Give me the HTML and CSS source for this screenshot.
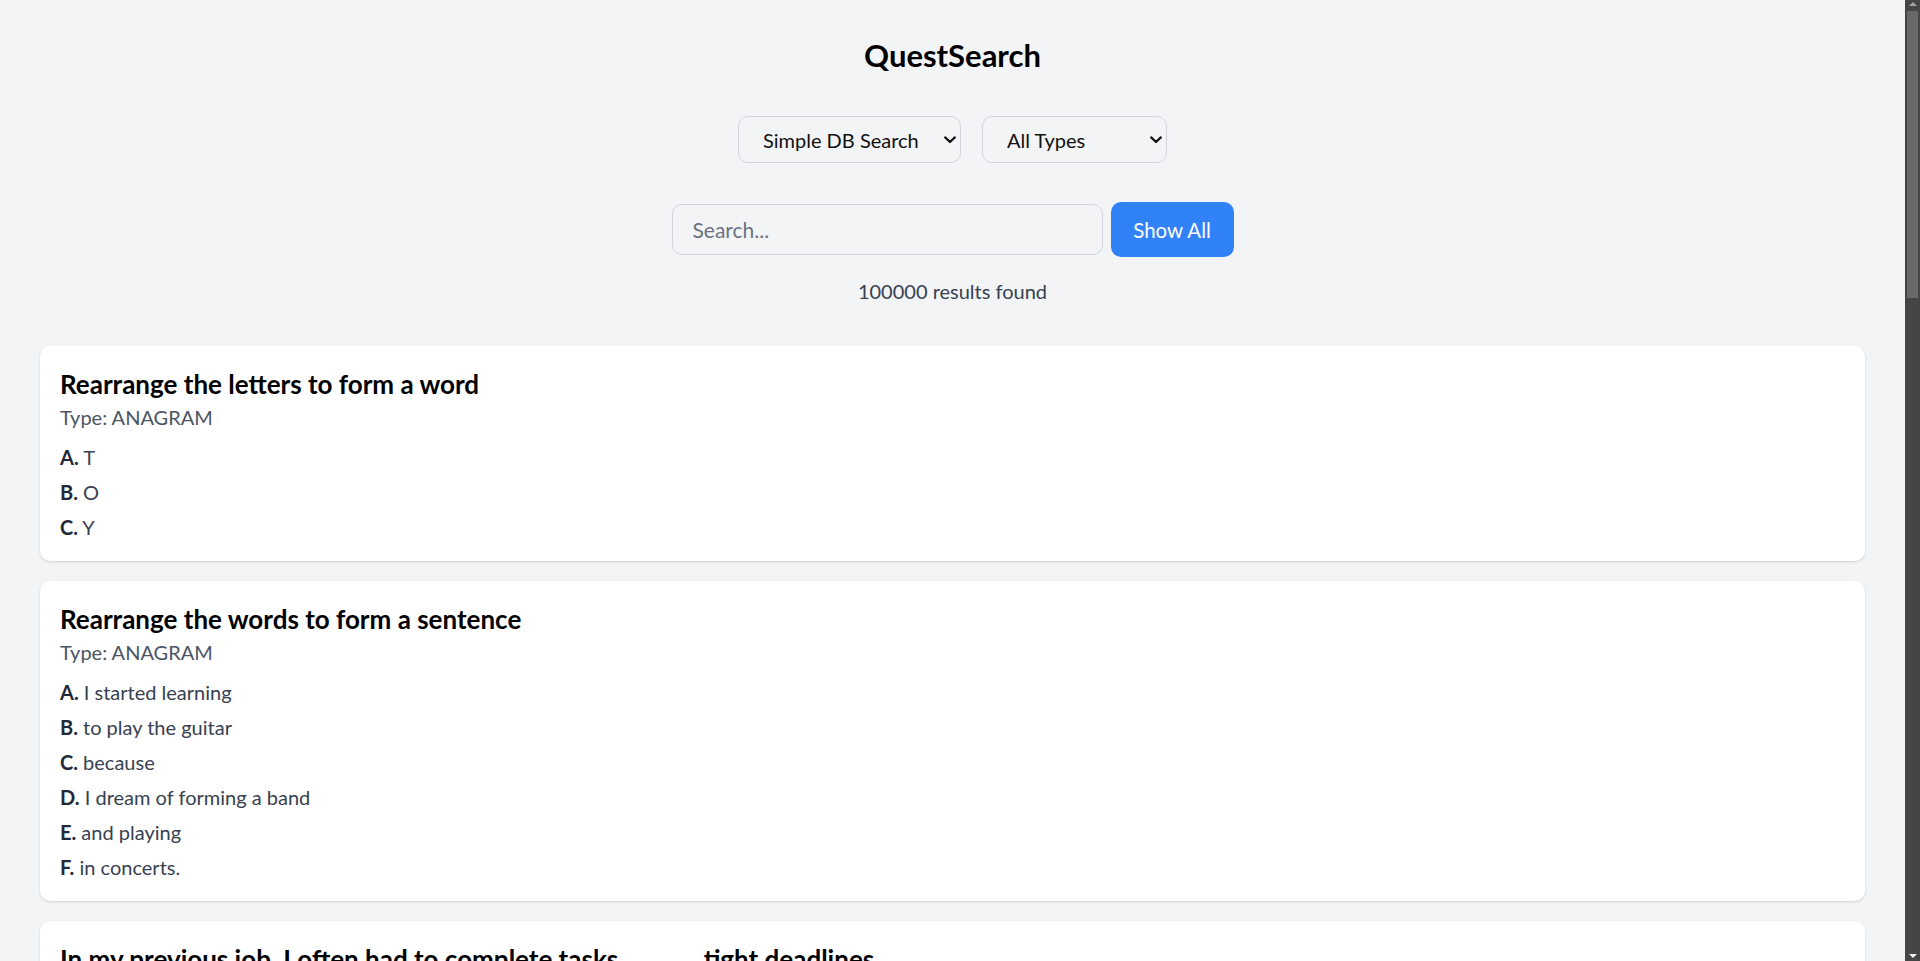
FILE: index.html
```html
<!DOCTYPE html>
<html lang="en">
<head>
<meta charset="utf-8">
<title>QuestSearch</title>
<link rel="stylesheet" href="styles.css">
</head>
<body>
<div class="viewport">
  <main class="app">
    <h1 class="app-title">QuestSearch</h1>
    <div class="filters">
      <div class="select-wrap">
        <select class="select select-mode">
          <option>Simple DB Search</option>
          <option>Full Text Search</option>
        </select>
        <svg class="select-chevron" width="12" height="8" viewBox="0 0 12 8"><path d="M1.2 1.4 L6 6 L10.8 1.4" fill="none" stroke="#111" stroke-width="2.2" stroke-linecap="round" stroke-linejoin="round"/></svg>
      </div>
      <div class="select-wrap">
        <select class="select select-type">
          <option>All Types</option>
          <option>ANAGRAM</option>
          <option>MCQ</option>
        </select>
        <svg class="select-chevron" width="12" height="8" viewBox="0 0 12 8"><path d="M1.2 1.4 L6 6 L10.8 1.4" fill="none" stroke="#111" stroke-width="2.2" stroke-linecap="round" stroke-linejoin="round"/></svg>
      </div>
    </div>
    <div class="search-row">
      <input class="search-input" type="text" placeholder="Search...">
      <button class="btn-primary">Show All</button>
    </div>
    <p class="results-count">100000 results found</p>

    <div class="results">
      <div class="card">
        <h2 class="card-title">Rearrange the letters to form a word</h2>
        <p class="card-type">Type: ANAGRAM</p>
        <ul class="options">
          <li><b>A.</b> T</li>
          <li><b>B.</b> O</li>
          <li><b>C.</b> Y</li>
        </ul>
      </div>
      <div class="card">
        <h2 class="card-title">Rearrange the words to form a sentence</h2>
        <p class="card-type">Type: ANAGRAM</p>
        <ul class="options">
          <li><b>A.</b> I started learning</li>
          <li><b>B.</b> to play the guitar</li>
          <li><b>C.</b> because</li>
          <li><b>D.</b> I dream of forming a band</li>
          <li><b>E.</b> and playing</li>
          <li><b>F.</b> in concerts.</li>
        </ul>
      </div>
      <div class="card">
        <h2 class="card-title">In my previous job, I often had to complete tasks ______ tight deadlines</h2>
        <p class="card-type">Type: MCQ</p>
        <ul class="options">
          <li><b>A.</b> under</li>
          <li><b>B.</b> on</li>
          <li><b>C.</b> in</li>
          <li><b>D.</b> with</li>
        </ul>
      </div>
    </div>
  </main>
  <div class="scrollbar" aria-hidden="true">
    <div class="scroll-btn scroll-up"><span class="tri tri-up"></span></div>
    <div class="scroll-thumb"></div>
    <div class="scroll-track"></div>
    <div class="scroll-btn scroll-down"><span class="tri tri-down"></span></div>
  </div>
</div>
</body>
</html>
```
FILE: styles.css
```css
html, body {
  margin: 0;
  height: 100%;
  overflow: hidden;
}
body {
  background: #f3f4f6;
  font-family: "Lato", "Noto Sans", sans-serif;
  color: #111827;
}
.viewport {
  display: flex;
  height: 100vh;
}
.app {
  flex: 1;
  min-width: 0;
  height: 100%;
  overflow: hidden;
  padding: 37px 40px 0;
}

/* fake scrollbar */
.scrollbar {
  width: 15px;
  flex: none;
  background: #454545;
  display: flex;
  flex-direction: column;
}
.scroll-btn {
  height: 11px;
  display: flex;
  justify-content: center;
  align-items: center;
}
.scroll-up { align-items: flex-start; padding-top: 2px; height: 9px; }
.scroll-down { align-items: flex-end; padding-bottom: 3px; height: 8px; }
.tri {
  width: 0;
  height: 0;
  border-left: 4px solid transparent;
  border-right: 4px solid transparent;
}
.tri-up { border-bottom: 4px solid #a3a3a3; }
.tri-down { border-top: 4px solid #f0f0f0; }
.scroll-thumb {
  height: 287px;
  margin: 0 2px;
  background: #686868;
}
.scroll-track { flex: 1; }

.app-title {
  margin: 0;
  font-size: 31px;
  line-height: 36px;
  font-weight: 700;
  text-align: center;
  color: #000;
}
.filters {
  display: flex;
  justify-content: center;
  gap: 21px;
  margin-top: 43px;
}
.select-wrap {
  position: relative;
  display: flex;
}
.select {
  appearance: none;
  -webkit-appearance: none;
  height: 47px;
  padding: 0 24px 0 24px;
  font-family: inherit;
  font-size: 20px;
  color: #111;
  background: #f3f4f6;
  border: 1px solid #d1d5db;
  border-radius: 10px;
}
.select-mode { width: 223px; }
.select-type { width: 185px; }
.select-chevron {
  position: absolute;
  right: 5px;
  top: 20px;
  pointer-events: none;
}
.search-row {
  display: flex;
  justify-content: center;
  align-items: center;
  gap: 8px;
  margin-top: 39px;
}
.search-input {
  box-sizing: border-box;
  width: 431px;
  height: 51px;
  padding: 0 20px;
  font-family: inherit;
  font-size: 21px;
  color: #111;
  background: #f3f4f6;
  border: 1px solid #d1d5db;
  border-radius: 10px;
  outline: none;
}
.search-input::placeholder {
  color: #6b7280;
}
.btn-primary {
  box-sizing: border-box;
  width: 123px;
  height: 55px;
  font-family: inherit;
  font-size: 20.5px;
  color: #fff;
  background: #3182f6;
  border: none;
  border-radius: 10px;
}
.results-count {
  margin: 20px 0 0;
  font-size: 20px;
  line-height: 28px;
  text-align: center;
  color: #374151;
}
.results {
  display: flex;
  flex-direction: column;
  gap: 20px;
  margin-top: 41px;
}
.card {
  background: #fff;
  border-radius: 10px;
  box-shadow: 0 1px 3px rgba(0, 0, 0, 0.1), 0 1px 2px rgba(0, 0, 0, 0.06);
  padding: 20px 20px 20px;
}
.card-title {
  margin: 0;
  font-size: 26px;
  line-height: 36px;
  font-weight: 700;
  color: #000;
}
.card-type {
  margin: 1px 0 0;
  font-size: 20px;
  line-height: 28px;
  color: #4b5563;
}
.options {
  list-style: none;
  margin: 12px 0 0;
  padding: 0;
  display: flex;
  flex-direction: column;
  gap: 7px;
}
.options li {
  font-size: 20px;
  line-height: 28px;
  color: #374151;
}
.options b {
  font-weight: 700;
  color: #1f2937;
}
```
